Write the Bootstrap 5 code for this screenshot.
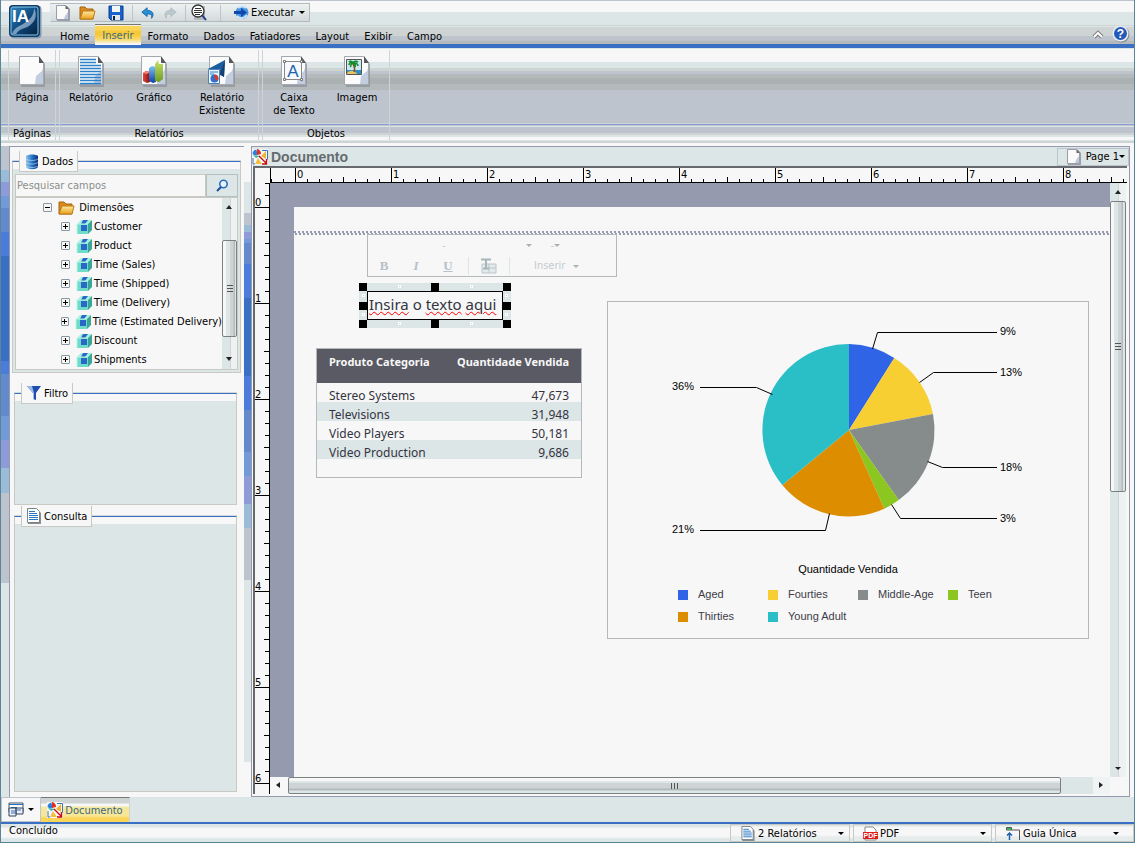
<!DOCTYPE html>
<html lang="pt">
<head>
<meta charset="utf-8">
<meta name="viewport" content="width=device-width, initial-scale=1">
<title>Documento</title>
<link rel="stylesheet" href="https://cdn.jsdelivr.net/npm/bootstrap@5.3.0/dist/css/bootstrap.min.css">
<style>
:root{--pale:#dde6e7;--paper:#f7f7f7;--steel:#bdc4ce;--slate:#969aae;--mist:#ced4d3;--blue:#3a70c4;--edge:#c8c9c3}
body{font:11px/13px "DejaVu Sans Condensed","DejaVu Sans",sans-serif;color:#000;background:var(--paper);border:solid #5c8499;border-width:0 1px 1px}
button,select,input{font:inherit;color:inherit}
.plain{border:0;background:none;padding:0}
svg{display:block;flex:none}
.caret{width:0;height:0;border:solid transparent;border-width:3px 3px 0;border-top-color:#000;flex:none}
/* header */
.topbar{height:48px;border-bottom:4px solid var(--blue);background:linear-gradient(#bdc4ce 1px,#f7f7f7 1px 12px,#dde6e7 12px 25px,#ced4d3 25px 26px,#dde6e7 26px 27px,#ced4d3 27px 36px,#bdc4ce 36px 41px,#b4babb 41px)}
.logo{margin:4px 0 0 7px}
.quickrow{padding:3px 0 0 8px}
.quick{height:19px;border:1px solid #b4babb;border-left-color:#dde6e7;background:linear-gradient(#eef1f2,#d3dadb)}
.quick .sep{width:1px;height:16px;background:#bdc4ce}
.tabs{gap:15px;line-height:15px;padding-left:10px;margin-top:2px}
.tabs a{color:#000;text-decoration:none;padding-top:5px;height:21px}
.tabs a.active{background:linear-gradient(#f4f0dc 1px,#fbd558 1px 5px,#f6c93a 6px 10px,#f7dd76 15px,#f7f7f7 19px);border-top:1px solid #777;color:#3b6a7f;padding:3px 7px 0;margin:0 -8px 0 -9px}
/* ribbon */
.ribbon{height:98px;padding:2px 0 0 7px;background:linear-gradient(#dde6e7 1px,#f7f7f7 1px 14px,#dde6e7 14px 20px,#ced4d3 20px 23px,#bdc4ce 23px 26px,#b4babb 26px 30px,#abb1b1 30px 36px,#b4babb 36px 42px,#bdc4ce 42px 75px,#ced4d3 75px 76px,#8b9dd8 76px 77px,#bdc4ce 77px 78px,#dde6e7 78px 79px,#bdc4ce 79px 85px,#ced4d3 85px 87px,#dde6e7 87px 89px,#f7f7f7 89px 92px,#dde6e7 92px 93px,#ced4d3 93px 95px,#f7f7f7 95px)}
.rgroup{border:solid var(--mist);border-width:0 1px;height:90px;margin-right:3px}
.rgroup .tools{height:77px}
.rgroup button{text-align:center;padding-top:5px;display:flex;flex-direction:column;align-items:center;gap:4px}
.w48{width:46px}.w62{width:62px}.w64{width:64px}.w72{width:72px}
/* left column */
.edge-l,.edge-r,.side{flex:none}
.edge-l{width:8px;background:linear-gradient(#bdc4ce 24px,#9bbcd6 24px 36px,#8f9bd8 36px 50px,#739ad8 50px 62px,#638acc 62px 86px,#4b7bdb 86px 110px,#3a70c4 110px 215px,#4b7bdb 215px 228px,#638acc 228px 270px,#739ad8 270px 294px,#8f9bd8 294px 322px,#9bbcd6 322px 347px,#bdc4ce 347px 437px,#dde6e7 437px)}
.edge-r{width:7px;background:linear-gradient(#f7f7f7 36px,#dde6e7 36px 67px,#bdc4ce 67px 79px,#9bbcd6 79px 86px,#8f9bd8 86px 93px,#739ad8 93px 97px,#638acc 97px 118px,#4b7bdb 118px 152px,#3a70c4 152px 230px,#4b7bdb 230px 264px,#638acc 264px 306px,#739ad8 306px 330px,#8f9bd8 330px 358px,#9bbcd6 358px 382px,#bdc4ce 382px 434px,#dde6e7 434px 616px,#f7f7f7 616px)}
.side{width:235px;border:solid var(--slate);border-width:1px 0 0 1px;padding:14px 7px 5px 4px}
.box{border:1px solid var(--edge);border-top:1px solid var(--blue);background:linear-gradient(#f7f7f7 7px,var(--pale) 7px);box-shadow:0 -1px 0 #d3dadb}
.box h2{font-size:11px;line-height:13px;font-weight:400;margin:-11px 0 0 6px;height:21px;width:max-content;background:var(--paper);border:1px solid var(--edge);border-top:0;padding:0 4px;display:flex;align-items:center;gap:2px}
.box.data{margin:0 -4px 20px -2px;padding:0 2px 2px}
.box.data h2{margin-left:4px}
.filter{min-height:112px;margin-bottom:11px}
.search{height:23px;margin-top:2px}
.search input{flex:1;min-width:0;border:1px solid var(--edge);background:var(--paper);padding:0 1px}
.search input::placeholder{color:#8a8f8c;opacity:1}
.search button{width:32px;border:1px solid #b4bfbf;background:var(--pale);display:flex;justify-content:center;align-items:center}
.tree{border:1px solid var(--edge);height:173px;background:var(--paper)}
.tree ul{list-style:none;margin:0;padding:0;min-width:0}
.tree li>div{height:19px;display:flex;align-items:center;gap:1px;white-space:nowrap}
.tree .lvl1>div{padding-left:27px}
.tree .lvl2>div{padding-left:45px}
.tog{width:9px;height:9px;margin-right:5px;border:1px solid #8796a8;border-radius:1px;background:linear-gradient(#000,#000) center/5px 1px no-repeat,#f7f7f0}
.tog.plus{background:linear-gradient(#000,#000) center/5px 1px no-repeat,linear-gradient(#000,#000) center/1px 5px no-repeat,#f7f7f0}
/* scroll bars */
.vbar{width:16px;flex:none;background:linear-gradient(90deg,var(--pale) 8px,var(--mist) 8px 9px,#eef1f1 9px)}
.tree .vbar{width:15px}
.vthumb{border:1px solid #7b8180;border-radius:2px;background:linear-gradient(90deg,#f7f7f7 3px,#dde6e7 3px 7px,#ced4d3 7px 10px,#b4babb 11px 12px,#dde6e7 12px);display:flex;align-items:center;justify-content:center}
.vgrip{width:6px;height:7px;background:repeating-linear-gradient(#555 0 1px,transparent 1px 3px)}
.hbar{background:var(--pale)}
.hthumb{border:1px solid #7b8180;border-radius:2px;background:linear-gradient(#f7f7f7 3px,#dde6e7 3px 5px,#ced4d3 5px 10px,#b4babb 11px 12px,#dde6e7 13px);display:flex;align-items:center;justify-content:center}
.hgrip{width:7px;height:6px;background:repeating-linear-gradient(90deg,#555 0 1px,transparent 1px 3px)}
/* document */
.doc{border:1px solid var(--slate);margin-right:4px;min-width:0}
.doctitle{height:19px;background:var(--pale)}
.doctitle h1{font:bold 14px/16px "Liberation Sans",Arial,sans-serif;color:#666b70;margin:0}
.pagebtn{border:1px solid var(--steel);height:18px;padding:0 3px 0 8px}
.work{display:grid;grid-template:15px minmax(0,1fr) 17px/15px minmax(0,1fr) 17px;border:solid #666a6e;border-width:2px 0 0 2px;margin:0 2px 2px 1px}
.hrule{border-bottom:1px solid #000;border-left:1px solid #000;grid-column:2/4;overflow:hidden;background:linear-gradient(90deg,#000 1px,transparent 1px) 24px 0/96px 15px repeat-x,linear-gradient(90deg,#000 1px,transparent 1px) 24px 100%/48px 5px repeat-x,linear-gradient(90deg,#000 1px,transparent 1px) 0 100%/12px 3px repeat-x;padding-left:26px}
.hrule span{flex:0 0 96px}
.vrule{border-right:1px solid #000;grid-row:2/4;overflow:hidden;background:linear-gradient(#000 1px,transparent 1px) 0 24px/15px 96px repeat-y,linear-gradient(#000 1px,transparent 1px) 100% 24px/5px 48px repeat-y,linear-gradient(#000 1px,transparent 1px) 100% 0/4px 12px repeat-y;padding-top:13px}
.vrule span{height:96px}
.vrule span:last-child{height:13px}
.hrule,.vrule{font-size:11px;line-height:13px}
.canvas{background:var(--slate);padding:24px 0 0 24px;overflow:hidden}
.sheet{height:100%;background:repeating-linear-gradient(90deg,var(--slate) 0 2px,#f7f7f7 2px 4px) 0 24px/100% 2px no-repeat,repeating-linear-gradient(90deg,#f7f7f7 0 1px,var(--slate) 1px 3px,#f7f7f7 3px 4px) 0 26px/100% 2px no-repeat,var(--paper);padding-top:27px}
.leftcol{width:313px}
.fmt{width:250px;height:43px;margin-left:73px;border:1px solid #b4babb;color:#c3cbd0;padding:4px 10px 0}
.fmt button{font:bold 13px/18px "Liberation Serif",serif;color:#b7c0c8;width:32px}
.fmt .row1{height:12px}
.fmt .row2{height:22px;margin:4px 0 0 -10px}
.fmt .caret{border-top-color:#a9b2b2}
.fmt .ins{font:11px/18px "DejaVu Sans Condensed",sans-serif;color:#c3cbd0;width:auto}
.fmt .bar{width:1px;height:18px;background:var(--pale)}
.pickfont{width:148px;padding-left:64px}
.picksize{width:22px}
.sel{width:152px;height:45px;background:var(--pale);margin:6px 0 0 65px;padding:8px}
.sel .txt{border:1px solid #000;background:var(--paper);height:29px;font:15px/24px "Noto Sans","Open Sans",sans-serif;color:#33343f;white-space:nowrap;padding-left:1px}
.sel u{text-decoration:underline wavy #f00 1px;text-underline-offset:1px}
.grip{position:absolute;width:8px;height:8px;background:#000}
.dot{position:absolute;width:3px;height:3px;border:1px solid #fff;background:#ced4d3}
.g-l{left:0}.g-c{left:72px}.g-r{right:0}.g-t{top:0}.g-m{top:19px}.g-b{bottom:0}
.d1{left:39px}.d2{left:111px}.dt{top:2px}.db{bottom:3px}.dl{left:3px}.dr{right:3px}.dy1{top:11px}.dy2{bottom:12px}
.rep{width:266px;margin:20px 0 0 22px;border:1px solid #b4babb;height:130px;font:12px/14px "Noto Sans","Open Sans",sans-serif;color:#33343f}
.rep table{width:100%}
.rep th{background:#595a63;color:#f7f7f7;height:34px;padding:0 12px;vertical-align:top;font-size:11px;line-height:26px;white-space:nowrap}
.rep td{height:19px;padding:6px 12px 0;line-height:13px}
.rep tbody tr:nth-child(even){background:var(--pale)}
.chartbox{width:482px;height:338px;margin-top:67px;border:1px solid #b4babb;font:11px/13px "Liberation Sans",Arial,sans-serif}
.keys{display:grid;grid-template-columns:repeat(4,90px);row-gap:9px;margin:12px 0 0 70px;padding:0;list-style:none;color:#3c3d48}
.keys i{width:10px;height:10px;margin-right:10px}
/* foot */
.docbar{height:25px;background:var(--pale)}
.docbar .win{width:40px;border:1px solid var(--steel);background:var(--paper)}
.docbar .cur{width:89px;color:#3b6a7f;border:solid var(--mist);border-width:0 1px 0 0;border-top:1px solid #777;background:linear-gradient(#ced4d3 5px,#f7f7f7 6px 8px,#f4e7a0 9px,#f8e694 18px,#fbd558 20px)}
.status{border-top:2px solid var(--blue);height:20px;background:linear-gradient(#dde6e7 3px,#f7f7f7 4px 13px,#dde6e7 15px)}
.cell{border:1px solid var(--edge);background:linear-gradient(#dde6e7 1px,#f7f7f7 2px 10px,#e6ecec 12px);margin-left:3px;padding:0 5px 0 9px;width:139px}
.cell.first{width:120px}
.cell.last{padding-right:14px}
.cell select{appearance:none;border:0;background:none;padding:0;margin-left:2px;min-width:0;flex:1;outline:0}
</style>
</head>
<body class="d-flex flex-column min-vh-100">
<svg width="0" height="0" class="position-absolute" aria-hidden="true">
<defs>
<linearGradient id="lg" x1="0" y1="0" x2="1" y2="1"><stop offset="0" stop-color="#2f86c0"/><stop offset=".5" stop-color="#0e4a7e"/><stop offset="1" stop-color="#05203f"/></linearGradient>
<linearGradient id="fo" x1="0" y1="0" x2="0" y2="1"><stop offset="0" stop-color="#fbe9a2"/><stop offset="1" stop-color="#eaa21d"/></linearGradient>
<linearGradient id="gr" x1="0" y1="0" x2="0" y2="1"><stop offset="0" stop-color="#c9e36a"/><stop offset="1" stop-color="#6d9c22"/></linearGradient>
<linearGradient id="bl" x1="0" y1="0" x2="0" y2="1"><stop offset="0" stop-color="#7ec3f2"/><stop offset="1" stop-color="#0d3fae"/></linearGradient>
<linearGradient id="rd" x1="0" y1="0" x2="1" y2="0"><stop offset="0" stop-color="#e0483a"/><stop offset="1" stop-color="#8a0d08"/></linearGradient>
<linearGradient id="db" x1="0" y1="0" x2="1" y2="0"><stop offset="0" stop-color="#8ec2ea"/><stop offset=".5" stop-color="#2478c6"/><stop offset="1" stop-color="#0c2c7c"/></linearGradient>
<symbol id="sheet" viewBox="0 0 28 32"><path d="M3 3h19l5 6v23H3z" fill="#8d919b" opacity=".75"/><path d="M1.500 1.500h19l5 7v21h-24z" fill="#fbfbfb" stroke="#a3a8b0"/><path d="M25 13v16h-8l1-8 6-5z" fill="#c2cde0"/><path d="M21 1v7h5z" fill="#56585e"/></symbol>
<symbol id="page" viewBox="0 0 16 17"><path d="M2 2h10l3 3v12H2z" fill="#9a9ea8"/><path d="M1.500 1.500h9l3 3v11h-12z" fill="#fafafa" stroke="#9a9ea8"/><path d="M13 8v7H9l1-3z" fill="#bcc9de"/><path d="M10.500 1v4H14z" fill="#666"/></symbol>
<symbol id="folder" viewBox="0 0 17 15"><path d="M1 14V2h5l2 2h6v10z" fill="#d98a1e" stroke="#a5640e"/><path d="M1 14l3-8h12l-2 8z" fill="url(#fo)" stroke="#c07a15"/></symbol>
<symbol id="cube" viewBox="0 0 17 16"><path d="M1 5l4-4h11l-4 4z" fill="#a5f0dd"/><path d="M12 5l4-4v10l-4 4z" fill="#3aa697"/><path d="M1 5h11v10H1z" fill="#6fdcc9"/><path d="M5 5l2-4h5l-3 4zM5 6h6v6H5z" fill="#2a68c8"/><path d="M1 15V5h11" fill="none" stroke="#b9f5e8"/></symbol>
<symbol id="text" viewBox="0 0 16 16"><path d="M2 1h9l4 4v11H2z" fill="#888d92"/><path d="M1.500.5h9l3 3v11h-12z" fill="#fff" stroke="#7b8288"/><path d="M3 3.500h6M3 5.500h8M3 7.500h9M3 9.500h9M3 11.500h9" stroke="#2776c4"/></symbol>
<symbol id="docu" viewBox="0 0 16 16"><path d="M0 0h16v16H0z" fill="#f7f7f7"/><path d="M5.500 6a5 5 0 0 1-5-1 5 5 0 0 1 4-4.500z" fill="#2d7fe0"/><path d="M5 0a5 5 0 0 1 4 5L5 6z" fill="#e2301d"/><path d="M1 6l7 1-4 2z" fill="#33b7a4"/><path d="M14 2v8L9 7z" fill="#f2b233"/><path d="M6 9l4 6H3z" fill="#f4c03c"/><path d="M10 1.500h5.500v9M1 9v6h2" fill="none" stroke="#3576bd"/><path d="M7 7l7 7m.5-4v5H10" fill="none" stroke="#c40d10" stroke-width="1.400"/></symbol>
</defs>
</svg>

<header>
<div class="topbar d-flex">
  <a href="#" class="logo" aria-label="IA"><svg width="34" height="35" viewBox="0 0 34 35"><rect x="2.500" y="1.500" width="31" height="33" rx="4" fill="#8698ab"/><rect x="1" y="1" width="31" height="32" rx="4" fill="#0d3c69"/><rect x="3" y="3" width="27" height="28" rx="2" fill="url(#lg)" stroke="#8bc7e8"/><path d="M4 30c3-8 9-8 14-12 5-3 8-8 8-14 4 7 1 14-5 18-5 3-9 2-13 8z" fill="#93b2ce" opacity=".8"/><text x="4" y="18" font-family="Liberation Sans" font-weight="bold" font-size="17" fill="#fff">IA</text></svg></a>
  <div class="flex-grow-1">
    <div class="quickrow d-flex">
    <div class="quick d-flex align-items-center" role="toolbar">
      <button class="plain ms-1" aria-label="Novo"><svg width="16" height="17"><use href="#page"/></svg></button>
      <button class="plain ms-2" aria-label="Abrir"><svg width="17" height="15"><use href="#folder"/></svg></button>
      <button class="plain ms-2 ps-1 me-1" aria-label="Salvar"><svg width="16" height="16" viewBox="0 0 16 16"><path d="M1 1h14v14H3l-2-2z" fill="#1a63c8" stroke="#0b3d91"/><path d="M4 1h8v6H4z" fill="#f2f6fb"/><path d="M4 10h8v5H4z" fill="#dfe6ee"/><path d="M5 11h2v4H5z" fill="#123"/></svg></button>
      <span class="sep ms-1"></span>
      <button class="plain ms-2" aria-label="Desfazer"><svg width="14" height="14" viewBox="0 0 16 14"><path d="M1 6l6-5v3c6 0 9 4 5 9 1-4-1-5-5-5v3z" fill="#2b8fd6" stroke="#1563a5"/></svg></button>
      <button class="plain ms-2" aria-label="Refazer"><svg width="14" height="14" viewBox="0 0 16 14"><path d="M15 6L9 1v3C3 4 0 8 4 13c-1-4 1-5 5-5v3z" fill="#bdc8cf" stroke="#b0bbc2"/></svg></button>
      <span class="sep ms-2"></span>
      <button class="plain ms-1 me-2" aria-label="Visualizar"><svg width="18" height="17" viewBox="0 0 18 17"><path d="M4 2h11v14H4z" fill="#b4babb"/><circle cx="8" cy="7" r="6" fill="#fff" stroke="#333" stroke-width="1.300"/><path d="M5 4.500h6M4 6.500h8M4 8.500h8M5 10.500h5" stroke="#333"/><path d="M12 11l4 5" stroke="#1c3c88" stroke-width="2"/></svg></button>
      <span class="sep ms-1"></span>
      <button class="plain d-flex align-items-center ms-2 ps-1" style="gap:2px"><svg width="16" height="15" viewBox="0 0 16 15"><circle cx="9" cy="7.500" r="6.500" fill="#4a93de"/><path d="M5 3c3-2 6-2 8 0M4 11c3 3 7 3 10-1" stroke="#cfe5f8" stroke-width="2" fill="none"/><path d="M1 6h7V3l6 4.500L8 12V9H1z" fill="#0f49ae"/></svg>Executar</button>
      <button class="plain ms-1 me-1" aria-label="Opções de execução"><span class="caret d-block"></span></button>
    </div></div>
    <div class="d-flex">
      <nav class="tabs d-flex flex-grow-1"><a href="#" class="ms-2">Home</a><a href="#" class="active">Inserir</a><a href="#">Formato</a><a href="#">Dados</a><a href="#">Fatiadores</a><a href="#">Layout</a><a href="#">Exibir</a><a href="#">Campo</a></nav>
      <button class="plain me-2" aria-label="Recolher"><svg width="12" height="10" viewBox="0 0 12 10"><path d="M2 8l4-4 4 4" fill="none" stroke="#777" stroke-width="4"/><path d="M2 8l4-4 4 4" fill="none" stroke="#fff" stroke-width="2"/></svg></button>
      <button class="plain me-1" aria-label="Ajuda"><svg width="18" height="18" viewBox="0 0 18 18"><circle cx="9.500" cy="9.500" r="8" fill="#8b8f98"/><circle cx="8.500" cy="8.500" r="8" fill="#e8ecf2"/><circle cx="8.500" cy="8.500" r="6.500" fill="#2458b8"/><text x="8.500" y="13" text-anchor="middle" font-family="Liberation Sans" font-size="12" font-weight="bold" fill="#fff">?</text></svg></button>
    </div>
  </div>
</div>

<div class="ribbon d-flex">
  <section class="rgroup">
    <div class="tools d-flex"><button class="plain w48"><svg width="28" height="32"><use href="#sheet"/></svg>Página</button></div>
    <div class="text-center">Páginas</div>
  </section>
  <section class="rgroup">
    <div class="tools d-flex">
      <button class="plain w62"><svg width="28" height="32" viewBox="0 0 28 32"><use href="#sheet"/><path d="M3 4.500h16M3 7.500h16M3 10.500h21M3 13.500h21M3 16.500h21M3 19.500h21M3 22.500h21M3 25.500h21M3 28.500h21" stroke="#2b82c9" stroke-width="1.500"/></svg>Relatório</button>
      <button class="plain w64"><svg width="28" height="32" viewBox="0 0 28 32"><use href="#sheet"/><path d="M3 18l3-2 4 1v10l-3 1-4-2z" fill="url(#rd)"/><path d="M3 18l3-2 4 1-3 2z" fill="#f2857a"/><path d="M9 13l3-2 4 1v15l-3 1-4-2z" fill="url(#bl)"/><path d="M15 9l3-4 1 4h4v15l-4 3-4-1z" fill="url(#gr)"/></svg>Gráfico</button>
      <button class="plain w72"><svg width="28" height="32" viewBox="0 0 28 32"><use href="#sheet"/><path d="M17 5L0 14h12l-2 5 6 3z" fill="#1c5f9e"/><path d="M17 5l-5 14 4 3z" fill="#133f74"/><path d="M.5 14.500h11v14H.5z" fill="#eef5fc" stroke="#4e7fb5"/><path d="M2 17h8M2 19h4" stroke="#2b82c9"/><circle cx="6.500" cy="23.500" r="4" fill="#2b72d0"/><path d="M6.500 23.500v-4a4 4 0 0 1 3 6.500z" fill="#e23a22"/></svg>Relatório<br>Existente</button>
    </div>
    <div class="text-center">Relatórios</div>
  </section>
  <section class="rgroup">
    <div class="tools d-flex">
      <button class="plain w62"><svg width="28" height="32" viewBox="0 0 28 32"><use href="#sheet"/><path d="M4.500 6.500h17v18h-17z" fill="#f7f9fc" stroke="#888"/><path d="M3.500 5.500h2v2h-2zM20.500 5.500h2v2h-2zM3.500 23.500h2v2h-2zM20.500 23.500h2v2h-2z" fill="#fff" stroke="#777"/><text x="13" y="22" text-anchor="middle" font-family="Liberation Sans" font-size="17" fill="#1c62ad">A</text></svg>Caixa<br>de Texto</button>
      <button class="plain w64"><svg width="28" height="32" viewBox="0 0 28 32"><use href="#sheet"/><path d="M3.500 4.500h15v15h-15z" fill="#c8e8f2" stroke="#555"/><path d="M4 15h14v4H4z" fill="#2f8fc5"/><path d="M4 18c3-3 8-3 10 1H4z" fill="#e8c45a"/><path d="M11 17c1-3 1-5-1-8" stroke="#8c4a1a" stroke-width="1.500" fill="none"/><path d="M10 8c-2-1-4 0-4 2M10 8c-1-2-3-2-4-1M10 8c1-2 3-2 5-1M10 8c3 0 5 1 5 3M10 8c-2 1-3 3-2 4M10 8c2 1 3 2 2 4" fill="none" stroke="#148a2b" stroke-width="1.600"/></svg>Imagem</button>
    </div>
    <div class="text-center">Objetos</div>
  </section>
</div>
</header>

<main class="d-flex flex-grow-1">
  <div class="edge-l"></div>
  <aside class="side d-flex flex-column">
    <section class="box data">
      <h2><svg width="16" height="17" viewBox="0 0 16 17"><path d="M2 3c2-2 10-2 12 0v11c-2 3-10 3-12 0z" fill="url(#db)"/><path d="M2 6c3 2 9 2 12 0M2 9.500c3 2 9 2 12 0M2 13c3 2 9 2 12 0" stroke="#cfe4f6" fill="none" opacity=".6"/></svg>Dados</h2>
      <div class="search d-flex"><input type="text" placeholder="Pesquisar campos" aria-label="Pesquisar campos"><button aria-label="Pesquisar"><svg width="13" height="13" viewBox="0 0 13 13"><circle cx="7.500" cy="5" r="3.700" fill="#eaf4fb" stroke="#2a6fbd" stroke-width="1.600"/><path d="M5 8l-4 4" stroke="#1d4f9a" stroke-width="2"/></svg></button></div>
      <div class="tree d-flex">
        <ul class="flex-grow-1">
          <li class="lvl1"><div><button class="plain tog" aria-label="Recolher"></button><svg width="17" height="15"><use href="#folder"/></svg>&nbsp;Dimensões</div></li>
          <li class="lvl2"><div><button class="plain tog plus" aria-label="Expandir"></button><svg width="17" height="16"><use href="#cube"/></svg>Customer</div></li>
          <li class="lvl2"><div><button class="plain tog plus" aria-label="Expandir"></button><svg width="17" height="16"><use href="#cube"/></svg>Product</div></li>
          <li class="lvl2"><div><button class="plain tog plus" aria-label="Expandir"></button><svg width="17" height="16"><use href="#cube"/></svg>Time (Sales)</div></li>
          <li class="lvl2"><div><button class="plain tog plus" aria-label="Expandir"></button><svg width="17" height="16"><use href="#cube"/></svg>Time (Shipped)</div></li>
          <li class="lvl2"><div><button class="plain tog plus" aria-label="Expandir"></button><svg width="17" height="16"><use href="#cube"/></svg>Time (Delivery)</div></li>
          <li class="lvl2"><div><button class="plain tog plus" aria-label="Expandir"></button><svg width="17" height="16"><use href="#cube"/></svg>Time (Estimated Delivery)</div></li>
          <li class="lvl2"><div><button class="plain tog plus" aria-label="Expandir"></button><svg width="17" height="16"><use href="#cube"/></svg>Discount</div></li>
          <li class="lvl2"><div><button class="plain tog plus" aria-label="Expandir"></button><svg width="17" height="16"><use href="#cube"/></svg>Shipments</div></li>
        </ul>
        <div class="vbar d-flex flex-column">
          <svg width="15" height="18" viewBox="0 0 15 18"><path d="M4 11l3-4 3 4z" fill="#222"/></svg>
          <div class="flex-grow-1 d-flex flex-column justify-content-end"><div class="vthumb" style="height:80%"><span class="vgrip"></span></div></div>
          <svg width="15" height="32" viewBox="0 0 15 32"><path d="M4 20l3 4 3-4z" fill="#222"/></svg>
        </div>
      </div>
    </section>
    <section class="box filter"><h2><svg width="16" height="16" viewBox="0 0 16 16"><path d="M1 1h14l-5 7v7l-3-1V8z" fill="#1e4fae"/><path d="M1 1h5l2 7v6l-1 0V8z" fill="#9db9e6"/></svg>Filtro</h2></section>
    <section class="box flex-grow-1"><h2><svg width="16" height="16"><use href="#text"/></svg>Consulta</h2></section>
  </aside>
  <div class="edge-r"></div>
  <section class="doc flex-grow-1 d-flex flex-column">
    <div class="doctitle d-flex align-items-center justify-content-between">
      <div class="d-flex align-items-center" style="gap:3px"><svg width="16" height="16"><use href="#docu"/></svg><h1>Documento</h1></div>
      <button class="plain pagebtn d-flex align-items-center"><svg width="16" height="17"><use href="#page"/></svg><span class="ms-1">Page 1</span><span class="caret"></span></button>
    </div>
    <div class="work flex-grow-1">
      <div></div>
      <div class="hrule d-flex"><span>0</span><span>1</span><span>2</span><span>3</span><span>4</span><span>5</span><span>6</span><span>7</span><span>8</span></div>
      <div class="vrule d-flex flex-column"><span>0</span><span>1</span><span>2</span><span>3</span><span>4</span><span>5</span><span>6</span></div>
      <div class="canvas"><div class="sheet d-flex">
        <div class="leftcol flex-shrink-0">
          <div class="fmt">
            <div class="row1 d-flex align-items-center"><span class="pickfont">-</span><span class="caret me-0" aria-hidden="true"></span><span class="picksize text-end">-</span><span class="caret"></span></div>
            <div class="row2 d-flex align-items-center"><button class="plain">B</button><button class="plain"><em>I</em></button><button class="plain"><span class="text-decoration-underline">U</span></button>
              <span class="bar ms-1"></span>
              <button class="plain ms-1" aria-label="Propriedades"><svg class="mx-auto" width="16" height="16" viewBox="0 0 16 16"><path d="M1 6h14v9H1z" fill="#e3eaeb" stroke="#bcc5ca"/><path d="M8 6v9M8 10h7" stroke="#bcc5ca"/><path d="M0 1.500h10M5 1v9M2 10.500h6" stroke="#a9b3ba" stroke-width="2"/></svg></button>
              <span class="bar ms-1"></span>
              <button class="plain ins ms-4">Inserir</button><span class="caret ms-2 me-1"></span></div>
          </div>
          <div class="sel position-relative"><div class="txt"><u>Insira</u> o <u>texto</u> <u>aqui</u></div>
            <span class="grip g-l g-t"></span><span class="grip g-c g-t"></span><span class="grip g-r g-t"></span><span class="grip g-l g-m"></span><span class="grip g-r g-m"></span><span class="grip g-l g-b"></span><span class="grip g-c g-b"></span><span class="grip g-r g-b"></span>
            <span class="dot d1 dt"></span><span class="dot d2 dt"></span><span class="dot d1 db"></span><span class="dot d2 db"></span><span class="dot dl dy1"></span><span class="dot dl dy2"></span><span class="dot dr dy1"></span><span class="dot dr dy2"></span>
          </div>
          <div class="rep"><table>
            <thead><tr><th>Produto Categoria</th><th class="text-end">Quantidade Vendida</th></tr></thead>
            <tbody><tr><td>Stereo Systems</td><td class="text-end">47,673</td></tr><tr><td>Televisions</td><td class="text-end">31,948</td></tr><tr><td>Video Players</td><td class="text-end">50,181</td></tr><tr><td>Video Production</td><td class="text-end">9,686</td></tr></tbody>
          </table></div>
        </div>
        <div class="chartbox flex-shrink-0">
          <svg width="480" height="261" viewBox="0 0 480 261">
            <path d="M241 128V42A86 86 0 0 1 286.300 56z" fill="#3064e6"/><path d="M241 128L286.300 56A86 86 0 0 1 325 112z" fill="#f7cf33"/><path d="M241 128L325 112A86 86 0 0 1 290.700 198z" fill="#858c8b"/><path d="M241 128L290.700 198A86 86 0 0 1 276.300 206.700z" fill="#8bc621"/><path d="M241 128L276.300 206.700A86 86 0 0 1 174.300 183z" fill="#dd8d00"/><path d="M241 128L174.300 183A86 86 0 0 1 241 42z" fill="#2abec6"/>
            <g fill="none" stroke="#000"><path d="M264.500 47l5-16.500H389M311.500 80.500l14-10H389M319.500 159.500l15 6H389M283.500 202.500l9 14H389M164.500 92.500l-16-7H92M221.500 211.500l-4 17H92"/></g>
            <g font-size="11"><text x="392" y="33">9%</text><text x="392" y="74">13%</text><text x="392" y="169">18%</text><text x="392" y="220">3%</text><text x="64" y="88">36%</text><text x="64" y="231">21%</text></g>
          </svg>
          <div class="text-center">Quantidade Vendida</div>
          <ul class="keys text-nowrap">
            <li class="d-flex align-items-center"><i style="background:#3064e6"></i>Aged</li><li class="d-flex align-items-center"><i style="background:#f7cf33"></i>Fourties</li><li class="d-flex align-items-center"><i style="background:#858c8b"></i>Middle-Age</li><li class="d-flex align-items-center"><i style="background:#8bc621"></i>Teen</li><li class="d-flex align-items-center"><i style="background:#dd8d00"></i>Thirties</li><li class="d-flex align-items-center"><i style="background:#2abec6"></i>Young Adult</li>
          </ul>
        </div>
      </div></div>
      <div class="vbar d-flex flex-column">
        <svg width="16" height="18" viewBox="0 0 16 18"><path d="M5 11l3-4 3 4z" fill="#222"/></svg>
        <div class="flex-grow-1"><div class="vthumb" style="height:52%"><span class="vgrip"></span></div></div>
        <svg width="16" height="17" viewBox="0 0 16 17"><path d="M5 7l3 3 3-3z" fill="#222"/></svg>
      </div>
      <div class="hbar d-flex">
        <svg width="18" height="17" viewBox="0 0 18 17" style="background:#f7f7f7"><path d="M10 5v6L6 8z" fill="#222"/></svg>
        <div class="flex-grow-1 d-flex"><div class="hthumb" style="width:96%"><span class="hgrip"></span></div></div>
        <svg width="17" height="17" viewBox="0 0 17 17" style="background:#f0f3f3"><path d="M6 5v6l4-3z" fill="#222"/></svg>
      </div>
      <div></div>
    </div>
  </section>
</main>

<footer>
  <div class="docbar d-flex">
    <button class="plain win d-flex align-items-center justify-content-center gap-1"><svg width="16" height="15" viewBox="0 0 16 15"><path d="M1 1h14v9H1z" fill="#fff" stroke="#456"/><path d="M1 2.500h14M3 5.500h6M3 8.500h4" stroke="#2b6fb6"/><path d="M1 6h7v8H1zM8 6h7v6H8z" fill="#eef" stroke="#345"/><path d="M3 9h4M3 11h4M9 8h4" stroke="#2b6fb6"/></svg><span class="caret"></span></button>
    <button class="plain cur d-flex align-items-center justify-content-center" style="gap:2px"><svg width="16" height="16"><use href="#docu"/></svg>Documento</button>
  </div>
  <div class="status d-flex">
    <div class="flex-grow-1 ps-2">Concluído</div>
    <label class="cell first d-flex align-items-center"><svg width="16" height="15" viewBox="0 0 16 16"><use href="#text"/></svg><select aria-label="Relatórios"><option>2 Relatórios</option></select><span class="caret"></span></label>
    <label class="cell d-flex align-items-center"><svg width="15" height="15" viewBox="0 0 15 15"><path d="M2 1h8l3 3v10H2z" fill="#fff" stroke="#888"/><path d="M0 6h15v7H0z" fill="#e01b1b"/><text x="7.500" y="12" text-anchor="middle" font-family="Liberation Sans" font-size="7" font-weight="bold" fill="#fff">PDF</text></svg><select aria-label="Formato"><option>PDF</option></select><span class="caret"></span></label>
    <label class="cell last d-flex align-items-center"><svg width="16" height="15" viewBox="0 0 16 15"><path d="M1.500 4V1.500h5V4h8v10M1.500 4h5" fill="none" stroke="#555"/><path d="M2 2h4v2H2z" fill="#29c24a"/><path d="M4.500 14V8M2 9.500L4.500 7 7 9.500" stroke="#1f5fae" stroke-width="1.500" fill="none"/></svg><select aria-label="Guia"><option>Guia Única</option></select><span class="caret"></span></label>
  </div>
</footer>
<script src="https://cdn.jsdelivr.net/npm/bootstrap@5.3.0/dist/js/bootstrap.bundle.min.js"></script>
</body>
</html>
